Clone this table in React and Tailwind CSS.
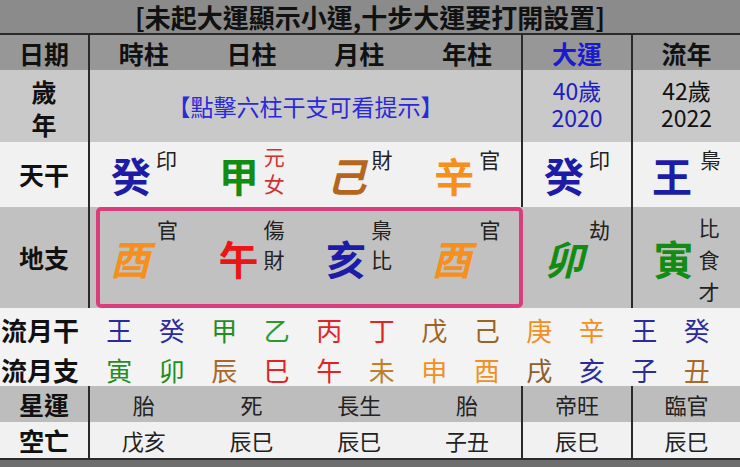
import React from "react";

const blue = "text-[#1c1ca6]";
const green = "text-[#128c12]";
const brown = "text-[#b5661c]";
const orange = "text-[#f5901c]";
const red = "text-[#ec1515]";

const cols = "grid grid-cols-[90px_repeat(4,minmax(0,1fr))_110px_109px]";
const lineR = "border-r-2 border-[#2a2a2a]";
const lineL = "border-l-2 border-[#2a2a2a]";

const Gz = ({ ch, color, tags = [], italic, tagColor = "text-[#222]", lead = "leading-[28px]", mt = "mt-[3px]", extra = "" }) => (
  <div className={`flex h-full items-center justify-center gap-[5px] ${extra}`}>
    <span className={`text-[40px] font-bold leading-none ${color} ${italic ? "italic" : ""}`}>{ch}</span>
    <div className={`flex flex-col self-start text-[21px] ${lead} ${mt} ${tagColor}`}>
      {tags.map((t, i) => (
        <span key={i}>{t}</span>
      ))}
    </div>
  </div>
);

const monthGan = [
  ["王", "text-[#2b2b9c]"],
  ["癸", "text-[#2b2b9c]"],
  ["甲", "text-[#1f8f1f]"],
  ["乙", "text-[#2a9a2a]"],
  ["丙", "text-[#e02424]"],
  ["丁", "text-[#e02424]"],
  ["戊", "text-[#9c6424]"],
  ["己", "text-[#9c6424]"],
  ["庚", "text-[#ef9020]"],
  ["辛", "text-[#ef9020]"],
  ["王", "text-[#2b2b9c]"],
  ["癸", "text-[#2b2b9c]"],
];

const monthZhi = [
  ["寅", "text-[#1f8f1f]"],
  ["卯", "text-[#1f8f1f]"],
  ["辰", "text-[#a86a2a]"],
  ["巳", "text-[#e02424]"],
  ["午", "text-[#e02424]"],
  ["未", "text-[#c0802a]"],
  ["申", "text-[#ef9020]"],
  ["酉", "text-[#ef9020]"],
  ["戌", "text-[#8a6030]"],
  ["亥", "text-[#2b2b9c]"],
  ["子", "text-[#2b2b9c]"],
  ["丑", "text-[#a86a2a]"],
];

export default function App() {
  return (
    <div className="w-[740px] overflow-hidden font-['Noto_Sans_CJK_TC','Noto_Sans_CJK_SC',sans-serif] text-[#111]">
      {/* title */}
      <div className="flex h-[35px] items-center justify-center border-b-2 border-[#2a2a2a] bg-[#8b8b8b] text-[26px] font-bold">
        [未起大運顯示小運,十步大運要打開設置]
      </div>

      {/* header */}
      <div className={`${cols} h-[35px] bg-[#979797] text-[25px] font-bold`}>
        <div className={`flex items-center justify-center ${lineR}`}>日期</div>
        {["時柱", "日柱", "月柱", "年柱"].map((t) => (
          <div key={t} className="flex items-center justify-center">{t}</div>
        ))}
        <div className={`flex items-center justify-center ${lineL} text-[#1a1ad0]`}>大運</div>
        <div className={`flex items-center justify-center ${lineL}`}>流年</div>
      </div>

      {/* age / year */}
      <div className={`${cols} h-[72px] bg-[#c9c9c9]`}>
        <div className={`flex flex-col items-center justify-center ${lineR} pt-[3px] text-[25px] font-bold leading-[33px]`}>
          <span>歲</span>
          <span>年</span>
        </div>
        <div className="col-span-4 flex items-center justify-center text-[23px] text-[#2a2ad8]">
          【點擊六柱干支可看提示】
        </div>
        <div className={`flex flex-col items-center justify-center ${lineL} pb-[5px] text-[23px] leading-[27px] text-[#2020c0]`}>
          <span>40歲</span>
          <span>2020</span>
        </div>
        <div className={`flex flex-col items-center justify-center ${lineL} pb-[5px] text-[23px] leading-[27px]`}>
          <span>42歲</span>
          <span>2022</span>
        </div>
      </div>

      {/* heavenly stems */}
      <div className={`${cols} h-[65px] bg-[#f1f1f1]`}>
        <div className={`flex items-center justify-center ${lineR} text-[25px] font-bold`}>天干</div>
        <Gz ch="癸" color={blue} tags={["印"]} />
        <Gz ch="甲" color={green} tags={["元", "女"]} tagColor="text-[#d03030]" lead="leading-[27px]" mt="mt-[1px]" />
        <Gz ch="己" color={brown} tags={["財"]} italic />
        <Gz ch="辛" color={orange} tags={["官"]} />
        <div className={lineL}>
          <Gz ch="癸" color={blue} tags={["印"]} />
        </div>
        <div className={lineL}>
          <Gz ch="王" color={blue} tags={["梟"]} extra="gap-[8px]" />
        </div>
      </div>

      {/* earthly branches */}
      <div className={`${cols} h-[101px] bg-[#c1c1c1]`}>
        <div className={`flex items-center justify-center ${lineR} text-[25px] font-bold`}>地支</div>
        <div className="col-span-4 pl-[6px]">
          <div className="mr-[-2px] grid h-full grid-cols-[98px_107px_108px_1fr] rounded-[5px] border-[4px] border-[#da3d7c]">
            <Gz ch="酉" color={orange} tags={["官"]} italic extra="pr-[10px] gap-[7px]" mt="mt-[3px]" lead="leading-[30px]" />
            <Gz ch="午" color={red} tags={["傷", "財"]} mt="mt-[3px]" lead="leading-[30px]" />
            <Gz ch="亥" color={blue} tags={["梟", "比"]} mt="mt-[3px]" lead="leading-[30px]" />
            <Gz ch="酉" color={orange} tags={["官"]} italic extra="gap-[8px]" mt="mt-[3px]" lead="leading-[30px]" />
          </div>
        </div>
        <div className="pl-[2px]">
          <Gz ch="卯" color={green} tags={["劫"]} italic mt="mt-[7px]" lead="leading-[30px]" />
        </div>
        <div className={lineL}>
          <Gz ch="寅" color={green} tags={["比", "食", "才"]} mt="mt-[4px]" lead="leading-[32px]" />
        </div>
      </div>

      {/* monthly stems / branches */}
      <div className="grid h-[42px] grid-cols-[93px_repeat(12,52.5px)] items-center bg-[#f3f3f3] text-[26px]">
        <div className="pl-[1px] font-bold">流月干</div>
        {monthGan.map(([c, col], i) => (
          <div key={i} className={`text-center ${col}`}>{c}</div>
        ))}
      </div>
      <div className="grid h-[36px] grid-cols-[93px_repeat(12,52.5px)] items-center bg-[#f3f3f3] text-[26px]">
        <div className="pl-[1px] font-bold">流月支</div>
        {monthZhi.map(([c, col], i) => (
          <div key={i} className={`text-center ${col}`}>{c}</div>
        ))}
      </div>

      {/* star luck */}
      <div className={`${cols} h-[36px] bg-[#bdbdbd] text-[22px] text-[#222]`}>
        <div className={`flex items-center justify-center ${lineR} text-[25px] font-bold text-[#111]`}>星運</div>
        {["胎", "死", "長生", "胎"].map((t, i) => (
          <div key={i} className="flex items-center justify-center">{t}</div>
        ))}
        <div className={`flex items-center justify-center ${lineL}`}>帝旺</div>
        <div className={`flex items-center justify-center ${lineL}`}>臨官</div>
      </div>

      {/* void */}
      <div className={`${cols} h-[36px] bg-[#f1f1f1] text-[22px] text-[#222]`}>
        <div className={`flex items-center justify-center ${lineR} text-[25px] font-bold text-[#111]`}>空亡</div>
        {["戊亥", "辰巳", "辰巳", "子丑"].map((t, i) => (
          <div key={i} className="flex items-center justify-center">{t}</div>
        ))}
        <div className={`flex items-center justify-center ${lineL}`}>辰巳</div>
        <div className={`flex items-center justify-center ${lineL}`}>辰巳</div>
      </div>

      {/* bottom bar */}
      <div className="flex h-[36px] justify-center border-t-2 border-[#2a2a2a] bg-[#6e6e6e] pt-[2px] text-[26px] font-bold">
        【點擊大運流年查看流月詳細】
      </div>
    </div>
  );
}
